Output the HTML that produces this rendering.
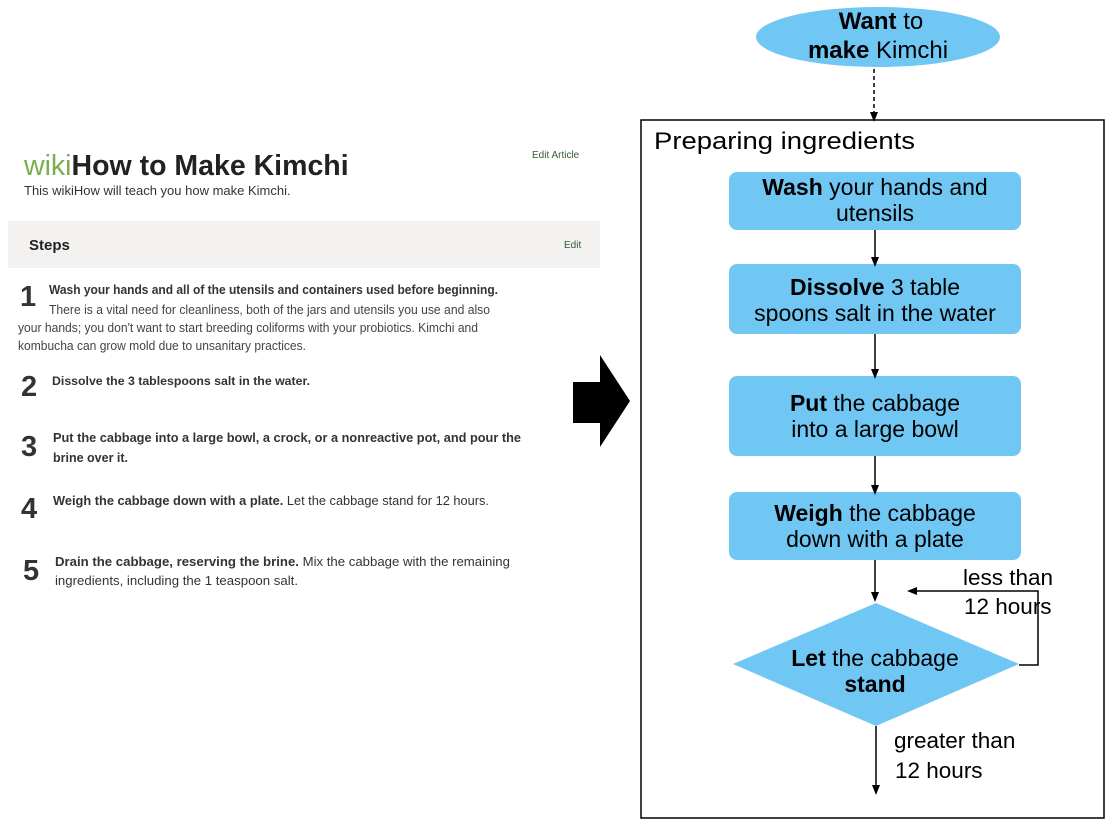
<!DOCTYPE html>
<html><head><meta charset="utf-8"><style>
html,body{margin:0;padding:0;background:#fff;width:1112px;height:824px;overflow:hidden}
svg{display:block;font-family:"Liberation Sans",Arial,sans-serif}
</style></head><body>
<svg width="1112" height="824" viewBox="0 0 1112 824" xmlns="http://www.w3.org/2000/svg">
<defs><marker id="ah" markerWidth="10" markerHeight="10" refX="5" refY="5" orient="auto" markerUnits="userSpaceOnUse"><path d="M0,1 L10,5 L0,9 Z" fill="#000"/></marker></defs>
<text x="24" y="175" font-size="28.5" font-weight="bold" fill="#222"><tspan fill="#7aae4e" font-weight="normal">wiki</tspan>How to Make Kimchi</text>
<text x="24" y="195" font-size="13" fill="#333">This wikiHow will teach you how make Kimchi.</text>
<text x="532" y="158" font-size="10" fill="#2f5e2f">Edit Article</text>
<rect x="8" y="221" width="592" height="47" fill="#f3f2f0"/>
<text x="29" y="250" font-size="15" font-weight="bold" fill="#222">Steps</text>
<text x="564" y="248" font-size="10" fill="#2f5e2f">Edit</text>
<g fill="#333" font-size="12.5">
<text x="20" y="306" font-size="29" font-weight="bold">1</text>
<text x="49" y="294" font-weight="bold" textLength="449" lengthAdjust="spacingAndGlyphs">Wash your hands and all of the utensils and containers used before beginning.</text>
<text x="49" y="314" fill="#444" textLength="441" lengthAdjust="spacingAndGlyphs">There is a vital need for cleanliness, both of the jars and utensils you use and also</text>
<text x="18" y="332" fill="#444" textLength="460" lengthAdjust="spacingAndGlyphs">your hands; you don't want to start breeding coliforms with your probiotics. Kimchi and</text>
<text x="18" y="350" fill="#444" textLength="288" lengthAdjust="spacingAndGlyphs">kombucha can grow mold due to unsanitary practices.</text>
<text x="21" y="396" font-size="29" font-weight="bold">2</text>
<text x="52" y="385" font-weight="bold" font-size="11.5" textLength="258" lengthAdjust="spacingAndGlyphs">Dissolve the 3 tablespoons salt in the water.</text>
<text x="21" y="456" font-size="29" font-weight="bold">3</text>
<text x="53" y="442" font-weight="bold" textLength="468" lengthAdjust="spacingAndGlyphs">Put the cabbage into a large bowl, a crock, or a nonreactive pot, and pour the</text>
<text x="53" y="462" font-weight="bold">brine over it.</text>
<text x="21" y="518" font-size="29" font-weight="bold">4</text>
<text x="53" y="505" textLength="436" lengthAdjust="spacingAndGlyphs"><tspan font-weight="bold">Weigh the cabbage down with a plate.</tspan> Let the cabbage stand for 12 hours.</text>
<text x="23" y="580" font-size="29" font-weight="bold">5</text>
<text x="55" y="566" textLength="455" lengthAdjust="spacingAndGlyphs"><tspan font-weight="bold">Drain the cabbage, reserving the brine.</tspan> Mix the cabbage with the remaining</text>
<text x="55" y="585" textLength="243" lengthAdjust="spacingAndGlyphs">ingredients, including the 1 teaspoon salt.</text>
</g>
<path d="M573,382 L600,382 L600,355 L630,401 L600,447 L600,423 L573,423 Z" fill="#000"/>
<ellipse cx="878" cy="37" rx="122" ry="30" fill="#71c7f3"/>
<text x="881" y="29" font-size="24" text-anchor="middle" fill="#000"><tspan font-weight="bold">Want</tspan> to</text>
<text x="878" y="58" font-size="24" text-anchor="middle" fill="#000"><tspan font-weight="bold">make</tspan> Kimchi</text>
<line x1="874" y1="69" x2="874" y2="117" stroke="#000" stroke-width="1.5" stroke-dasharray="4,3" marker-end="url(#ah)"/>
<rect x="641" y="120" width="463" height="698" fill="none" stroke="#000" stroke-width="1.5"/>
<text x="654" y="149" font-size="24" textLength="261" lengthAdjust="spacingAndGlyphs">Preparing ingredients</text>
<g fill="#71c7f3">
<rect x="729" y="172" width="292" height="58" rx="8"/>
<rect x="729" y="264" width="292" height="70" rx="8"/>
<rect x="729" y="376" width="292" height="80" rx="8"/>
<rect x="729" y="492" width="292" height="68" rx="8"/>
<path d="M733,664 L876,603 L1019,664 L876,726 Z"/>
</g>
<g font-size="23" text-anchor="middle" fill="#000">
<text x="875" y="195"><tspan font-weight="bold">Wash</tspan> your hands and</text>
<text x="875" y="221">utensils</text>
<text x="875" y="295"><tspan font-weight="bold">Dissolve</tspan> 3 table</text>
<text x="875" y="321">spoons salt in the water</text>
<text x="875" y="411"><tspan font-weight="bold">Put</tspan> the cabbage</text>
<text x="875" y="437">into a large bowl</text>
<text x="875" y="521"><tspan font-weight="bold">Weigh</tspan> the cabbage</text>
<text x="875" y="547">down with a plate</text>
<text x="875" y="666"><tspan font-weight="bold">Let</tspan> the cabbage</text>
<text x="875" y="692" font-weight="bold">stand</text>
</g>
<g stroke="#000" stroke-width="1.5" fill="none">
<line x1="875" y1="230" x2="875" y2="262" marker-end="url(#ah)"/>
<line x1="875" y1="334" x2="875" y2="374" marker-end="url(#ah)"/>
<line x1="875" y1="456" x2="875" y2="490" marker-end="url(#ah)"/>
<line x1="875" y1="560" x2="875" y2="597" marker-end="url(#ah)"/>
<polyline points="1019,665 1038,665 1038,591 912,591" marker-end="url(#ah)"/>
<line x1="876" y1="726" x2="876" y2="790" marker-end="url(#ah)"/>
</g>
<g font-size="22.5" fill="#000">
<text x="963" y="585">less than</text>
<text x="964" y="614">12 hours</text>
<text x="894" y="748">greater than</text>
<text x="895" y="778">12 hours</text>
</g>
</svg>
</body></html>
